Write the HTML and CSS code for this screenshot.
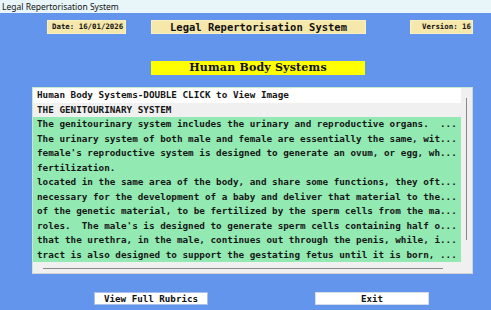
FILE: index.html
```html
<!DOCTYPE html>
<html lang="en">
<head>
    <meta charset="UTF-8">
    <title>Legal Repertorisation System</title>
    <link rel="stylesheet" href="styles.css">
</head>
<body>
    <div class="titlebar">Legal Repertorisation System</div>
    <div class="window">
        <div class="header-row">
            <div class="info-box date-box">Date: 16/01/2026</div>
            <div class="info-box title-box">Legal Repertorisation System</div>
            <div class="info-box version-box">Version: 16</div>
        </div>

        <div class="banner">Human Body Systems</div>

        <div class="list-box">
            <div class="list-content">
                <div class="list-row row-head">Human Body Systems-DOUBLE CLICK to View Image</div>
                <div class="list-row row-section">THE GENITOURINARY SYSTEM</div>
                <div class="list-row row-text">The genitourinary system includes the urinary and reproductive organs.  ...</div>
                <div class="list-row row-text">The urinary system of both male and female are essentially the same, wit...</div>
                <div class="list-row row-text">female's reproductive system is designed to generate an ovum, or egg, wh...</div>
                <div class="list-row row-text">fertilization.</div>
                <div class="list-row row-text">located in the same area of the body, and share some functions, they oft...</div>
                <div class="list-row row-text">necessary for the development of a baby and deliver that material to the...</div>
                <div class="list-row row-text">of the genetic material, to be fertilized by the sperm cells from the ma...</div>
                <div class="list-row row-text">roles.  The male's is designed to generate sperm cells containing half o...</div>
                <div class="list-row row-text">that the urethra, in the male, continues out through the penis, while, i...</div>
                <div class="list-row row-text">tract is also designed to support the gestating fetus until it is born, ...</div>
            </div>
            <div class="vscroll"><div class="vthumb"></div></div>
            <div class="hscroll"><div class="hthumb"></div></div>
            <div class="corner"></div>
        </div>

        <div class="button-row">
            <button class="action-button rubrics-button">View Full Rubrics</button>
            <button class="action-button exit-button">Exit</button>
        </div>
    </div>
</body>
</html>
```

FILE: styles.css
```css
/* Basic Reset */
* {
    margin: 0;
    padding: 0;
    box-sizing: border-box;
}

body {
    font-family: 'DejaVu Sans Mono', monospace;
    background-color: #6495ed;
    width: 491px;
    height: 310px;
    overflow: hidden;
}

.titlebar {
    height: 13px;
    background-color: #e8f6f9;
    font-family: 'Noto Sans', 'Open Sans', sans-serif;
    font-size: 8.5px;
    line-height: 13px;
    color: #111;
    padding-left: 2px;
}

.window {
    height: 297px;
    background-color: #6495ed;
    padding-top: 7px;
}

.header-row {
    display: flex;
    height: 14px;
    padding-left: 47px;
}

.info-box {
    background-color: #f6e7ab;
    border: 1px solid #fbf0c4;
    color: #111;
    font-weight: bold;
    height: 14px;
}

.date-box {
    width: 79px;
    font-size: 7.4px;
    line-height: 11px;
    padding-left: 4px;
}

.title-box {
    width: 215px;
    margin-left: 25px;
    font-size: 10.5px;
    font-weight: 600;
    line-height: 13px;
    text-align: center;
}

.version-box {
    width: 63px;
    margin-left: 44px;
    font-size: 7.4px;
    line-height: 11px;
    text-align: right;
    padding-right: 1px;
}

.banner {
    width: 214px;
    height: 14px;
    margin: 27px 0 0 151px;
    background-color: #ffff00;
    font-family: 'DejaVu Serif', serif;
    font-weight: 900;
    font-size: 11px;
    line-height: 14px;
    text-align: center;
    color: #111;
    letter-spacing: 0.2px;
}

.list-box {
    display: grid;
    grid-template-columns: 428px 11px;
    grid-template-rows: 174px 11px;
    width: 441px;
    height: 187px;
    margin: 12px 0 0 32px;
    border: 1px solid #c9e6cf;
    border-right-color: #d4d4d4;
    border-bottom-color: #d4d4d4;
    background-color: #f0f0f0;
}

.list-content {
    overflow: hidden;
}

.list-row {
    height: 14.5px;
    line-height: 14.5px;
    font-size: 9.3px;
    font-weight: bold;
    color: #161616;
    padding-left: 4px;
    white-space: pre;
}

.row-head {
    background-color: #ffffff;
    font-weight: 600;
}

.row-section {
    background-color: #f0f0f0;
    font-weight: 600;
}

.row-text {
    background-color: #92eab2;
}

.vscroll {
    background-color: #f0f0f0;
    padding: 10px 0 0 5px;
}

.vthumb {
    width: 1px;
    height: 142px;
    background-color: #8a8a8a;
}

.hscroll {
    background-color: #f0f0f0;
    padding: 6px 0 0 10px;
}

.hthumb {
    width: 400px;
    height: 1px;
    background-color: #8a8a8a;
}

.corner {
    background-color: #f0f0f0;
}

.button-row {
    display: flex;
    margin-top: 18px;
    padding-left: 94px;
}

.action-button {
    height: 13px;
    width: 114px;
    background-color: #ffffff;
    border: 1px solid #d6dcea;
    font-family: 'DejaVu Sans Mono', monospace;
    font-size: 9.2px;
    font-weight: bold;
    color: #111;
    line-height: 11px;
}

.rubrics-button {
    border-color: #a9bfe6;
}

.exit-button {
    margin-left: 107px;
}
```
